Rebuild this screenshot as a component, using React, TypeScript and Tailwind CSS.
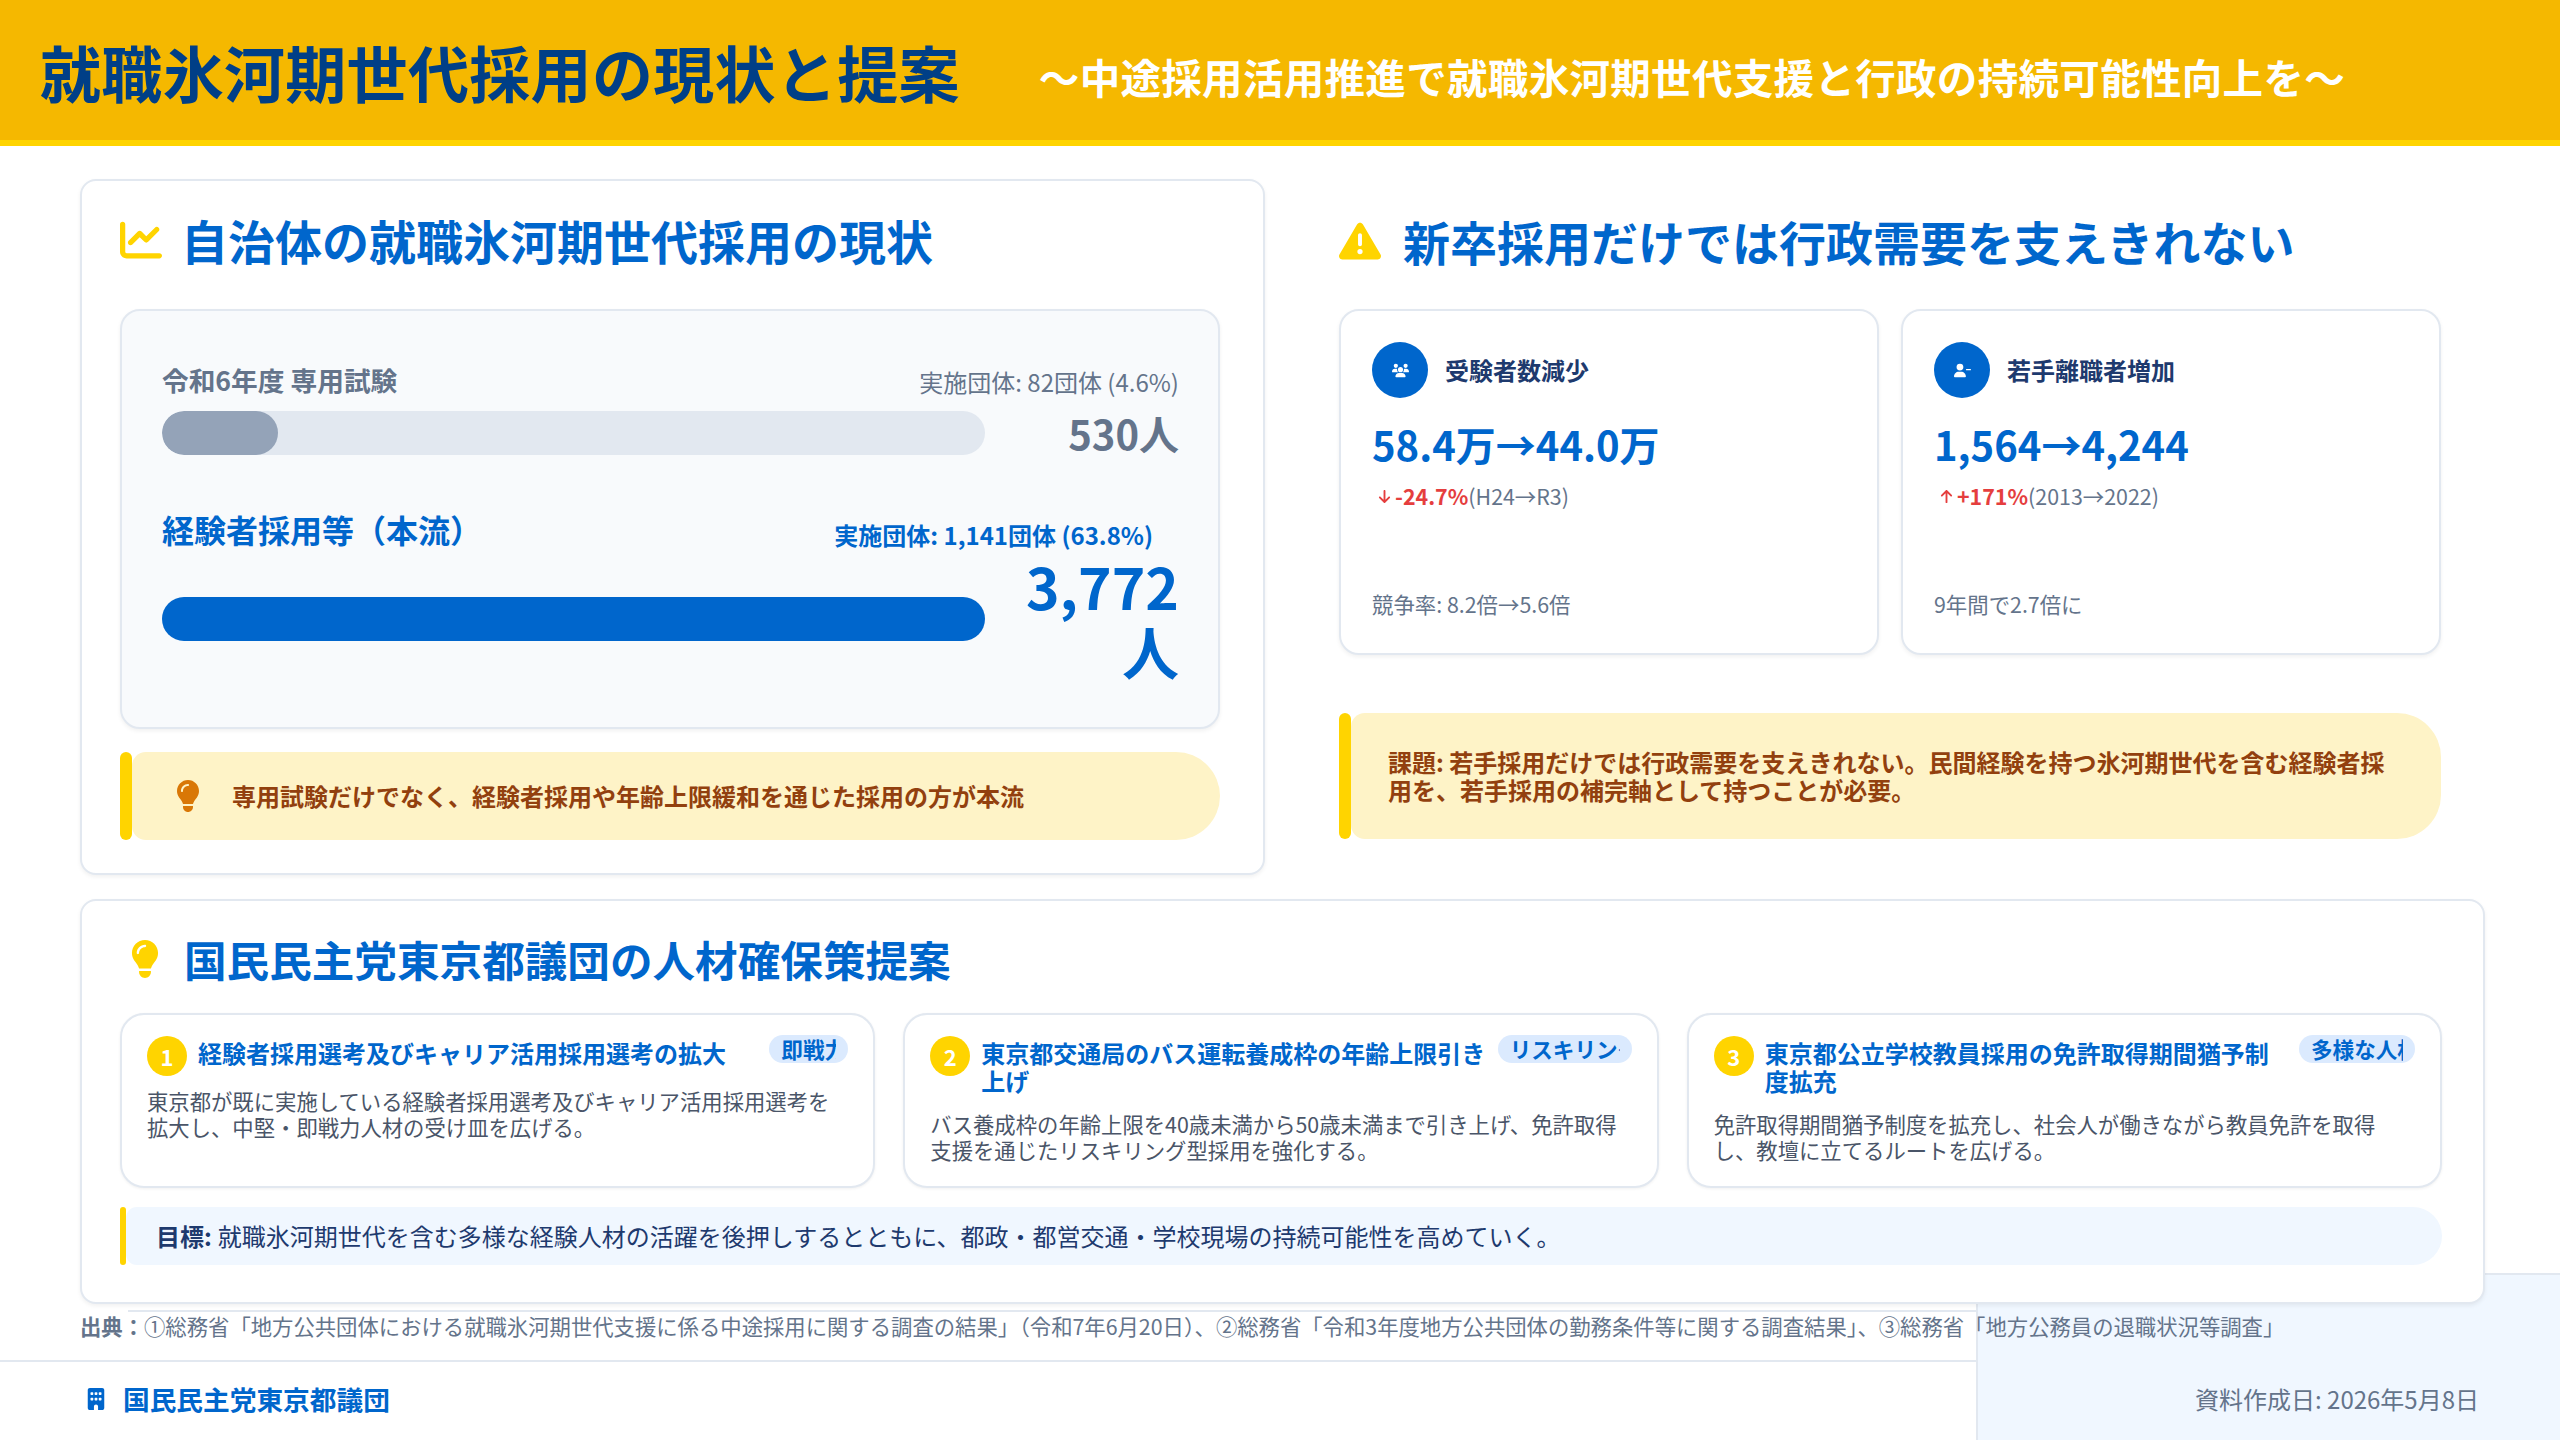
import { FaArrowDown, FaArrowUp, FaBuilding, FaChartLine, FaLightbulb, FaTriangleExclamation, FaUserMinus, FaUsers } from 'react-icons/fa6';

const proposals = [
  {
    no: '1',
    title: '経験者採用選考及びキャリア活用採用選考の拡大',
    tag: '即戦力',
    body: '東京都が既に実施している経験者採用選考及びキャリア活用採用選考を拡大し、中堅・即戦力人材の受け皿を広げる。',
    tagWidth: 'w-[79px]',
  },
  {
    no: '2',
    title: '東京都交通局のバス運転養成枠の年齢上限引き上げ',
    tag: 'リスキリング',
    body: 'バス養成枠の年齢上限を40歳未満から50歳未満まで引き上げ、免許取得支援を通じたリスキリング型採用を強化する。',
    tagWidth: 'w-[134px]',
  },
  {
    no: '3',
    title: '東京都公立学校教員採用の免許取得期間猶予制度拡充',
    tag: '多様な人材',
    body: '免許取得期間猶予制度を拡充し、社会人が働きながら教員免許を取得し、教壇に立てるルートを広げる。',
    tagWidth: 'w-[116px]',
  },
];

function StatCard({ icon, label, value, arrow, change, period, note }: { icon: React.ReactNode; label: string; value: string; arrow: React.ReactNode; change: string; period: string; note: string }) {
  return (
    <div className="flex-1 h-[346px] rounded-[20px] border-2 border-[#e2e8f0] bg-white shadow-[0_2px_4px_rgba(0,0,0,0.06)] px-[31px] pt-[31px] flex flex-col">
      <div className="flex items-center gap-[17px]">
        <div className="w-[56px] h-[56px] rounded-full bg-[#0066cc] flex items-center justify-center text-white text-[17px]">{icon}</div>
        <span className="text-[24px] font-bold text-[#1e3a6e]">{label}</span>
      </div>
      <div className="mt-[16px] text-[40px] leading-[60px] font-bold text-[#0066cc]">{value}</div>
      <div className="mt-[4px] text-[21.4px] leading-[36px] text-[#64748b] flex items-center">
        <span className="text-[#e53e3e] text-[15px] ml-[5px] mr-[3px]">{arrow}</span>
        <span className="font-bold text-[#e53e3e]">{change}</span>
        <span>{period}</span>
      </div>
      <div className="mt-auto mb-[31px] text-[21.4px] leading-[36px] text-[#64748b]">{note}</div>
    </div>
  );
}

export default function App() {
  return (
    <div className="relative w-[2560px] h-[1440px] overflow-hidden bg-white font-['Noto_Sans_CJK_JP',sans-serif]">
      <div className="absolute right-0 bottom-0 w-[584px] h-[167px] bg-[#f0f7ff] border-l-2 border-t-2 border-[#e2e8f0]" />

      {/* Header */}
      <header className="relative h-[146px] bg-[#f5b800] border-b-[6px] border-[#ffd400] flex items-center pl-[40px] tracking-[0.02em]">
        <h1 className="text-[61px] font-bold text-[#003f87] pt-[4px]">就職氷河期世代採用の現状と提案</h1>
        <p className="ml-[79px] text-[40.5px] font-bold text-white pt-[14px]">〜中途採用活用推進で就職氷河期世代支援と行政の持続可能性向上を〜</p>
      </header>

      <main className="relative px-[80px] pt-[33px]">
        <div className="flex">
          {/* Current state */}
          <section className="w-[1185px] h-[696px] rounded-[16px] border-2 border-[#e2e8f0] bg-white shadow-[0_2px_4px_rgba(0,0,0,0.06)] pl-[38px] pr-[43px] pt-[23px]">
            <h2 className="flex items-center gap-[19px] text-[47px] leading-[72px] font-bold text-[#0066cc]">
              <FaChartLine className="text-[#ffd400] text-[42px]" />
              自治体の就職氷河期世代採用の現状
            </h2>
            <div className="mt-[33px] h-[420px] rounded-[20px] border-2 border-[#e2e8f0] bg-[#f8fafc] shadow-[0_2px_4px_rgba(0,0,0,0.06)] pl-[40px] pr-[39px] pt-[49px]">
              <div className="flex items-end justify-between">
                <span className="text-[26.7px] leading-[40px] font-bold text-[#64748b]">令和6年度 専用試験</span>
                <span className="text-[24px] leading-[36px] text-[#64748b]">実施団体: 82団体 (4.6%)</span>
              </div>
              <div className="flex items-center mt-[3px]">
                <div className="w-[823px] h-[44px] rounded-full bg-[#e2e8f0] overflow-hidden">
                  <div className="w-[116px] h-full rounded-full bg-[#94a3b8]" />
                </div>
                <span className="flex-1 text-right text-[40px] leading-[60px] font-bold text-[#64748b]">530人</span>
              </div>
              <div className="flex items-end justify-between mt-[42px] pr-[26px]">
                <span className="text-[32px] leading-[48px] font-bold text-[#0066cc]">経験者採用等（本流）</span>
                <span className="text-[24px] leading-[36px] font-bold text-[#0066cc]">実施団体: 1,141団体 (63.8%)</span>
              </div>
              <div className="flex items-center">
                <div className="w-[823px] h-[44px] mt-[2px] rounded-full bg-[#0066cc]" />
                <span className="flex-1 text-right text-[57px] leading-[65px] font-bold text-[#0066cc] pl-[20px]">3,772人</span>
              </div>
            </div>
            <div className="mt-[23px] h-[88px] flex">
              <div className="w-[12px] rounded-full bg-[#ffd400]" />
              <div className="flex-1 rounded-l-[14px] rounded-r-[44px] bg-[#fef3c7] flex items-center pl-[40px] gap-[28px] text-[24px] font-bold text-[#92400e]">
                <FaLightbulb className="text-[#d97706] text-[32px]" />
                専用試験だけでなく、経験者採用や年齢上限緩和を通じた採用の方が本流
              </div>
            </div>
          </section>

          {/* Right column */}
          <section className="w-[1102px] ml-[74px] pt-[26px] flex flex-col">
            <h2 className="flex items-center gap-[22px] text-[47px] leading-[72px] font-bold text-[#0066cc]">
              <FaTriangleExclamation className="text-[#ffd400] text-[42px]" />
              新卒採用だけでは行政需要を支えきれない
            </h2>
            <div className="mt-[32px] flex gap-[22px]">
              <StatCard icon={<FaUsers />} label="受験者数減少" value="58.4万→44.0万" arrow={<FaArrowDown />} change="-24.7%" period="(H24→R3)" note="競争率: 8.2倍→5.6倍" />
              <StatCard icon={<FaUserMinus />} label="若手離職者増加" value="1,564→4,244" arrow={<FaArrowUp />} change="+171%" period="(2013→2022)" note="9年間で2.7倍に" />
            </div>
            <div className="mt-[58px] h-[126px] flex">
              <div className="w-[12px] rounded-full bg-[#ffd400]" />
              <div className="flex-1 rounded-l-[14px] rounded-r-[44px] bg-[#fef3c7] flex items-center pl-[37px] pr-[40px] text-[24px] leading-[28px] font-bold text-[#92400e]">
                課題: 若手採用だけでは行政需要を支えきれない。民間経験を持つ氷河期世代を含む経験者採用を、若手採用の補完軸として持つことが必要。
              </div>
            </div>
          </section>
        </div>

        {/* Proposals */}
        <section className="mt-[24px] w-[2405px] h-[405px] rounded-[16px] border-2 border-[#e2e8f0] bg-white shadow-[0_2px_4px_rgba(0,0,0,0.06)] pl-[38px] pr-[41px] pt-[25px]">
          <h2 className="flex items-center gap-[20px] text-[42.6px] leading-[66px] font-bold text-[#0066cc]">
            <FaLightbulb className="text-[#ffd400] text-[38px] ml-[6px]" />
            国民民主党東京都議団の人材確保策提案
          </h2>
          <div className="mt-[21px] grid grid-cols-3 gap-[28px]">
            {proposals.map((item) => (
              <div key={item.no} className="h-[175px] rounded-[24px] border-2 border-[#e2e8f0] bg-white shadow-[0_1px_3px_rgba(0,0,0,0.06)] px-[25px] pt-[21px]">
                <div className="flex items-start gap-[10px]">
                  <span className="shrink-0 w-[40px] h-[40px] rounded-full bg-[#ffd400] flex items-center justify-center text-[22px] font-bold text-white">{item.no}</span>
                  <span className="flex-1 ml-[1px] text-[24px] leading-[28px] font-bold text-[#0066cc] pt-[3px] pb-[4px]">{item.title}</span>
                  <span className={`shrink-0 h-[28px] -mt-[1px] rounded-full bg-[#dbeafe] px-[12px] text-[21.6px] leading-[28px] font-bold text-[#0066cc] ${item.tagWidth}`}>
                    <span className="block overflow-hidden whitespace-nowrap">{item.tag}</span>
                  </span>
                </div>
                <p className="mt-[12px] text-[21.35px] leading-[26px] text-[#4a5568]">{item.body}</p>
              </div>
            ))}
          </div>
          <div className="mt-[19px] h-[58px] flex">
            <div className="w-[6px] rounded-full bg-[#ffd400]" />
            <div className="flex-1 rounded-l-[12px] rounded-r-[32px] bg-[#f0f7ff] flex items-center pl-[30px] text-[24px] text-[#1e3a6e]">
              <b className="mr-[6px]">目標:</b>就職氷河期世代を含む多様な経験人材の活躍を後押しするとともに、都政・都営交通・学校現場の持続可能性を高めていく。
            </div>
          </div>
        </section>
      </main>

      {/* Source */}
      <div className="ml-[128px] mt-[6px] border-t-2 border-[#e2e8f0]" />
      <p className="relative z-10 pl-[80px] text-[21.35px] leading-[28px] text-[#64748b]">
        <b>出典：</b>①総務省「地方公共団体における就職氷河期世代支援に係る中途採用に関する調査の結果」（令和7年6月20日）、②総務省「令和3年度地方公共団体の勤務条件等に関する調査結果」、③総務省「地方公務員の退職状況等調査」
      </p>

      {/* Footer */}
      <footer className="mt-[20px] h-[76px] border-t-2 border-[#e2e8f0] flex items-center justify-between pl-[85px] pr-[81px]">
        <span className="relative z-10 flex items-center gap-[16px] text-[26.7px] font-bold text-[#0066cc]">
          <FaBuilding className="text-[22px]" />
          国民民主党東京都議団
        </span>
        <span className="relative z-10 text-[24px] text-[#64748b]">資料作成日: 2026年5月8日</span>
      </footer>
    </div>
  );
}
